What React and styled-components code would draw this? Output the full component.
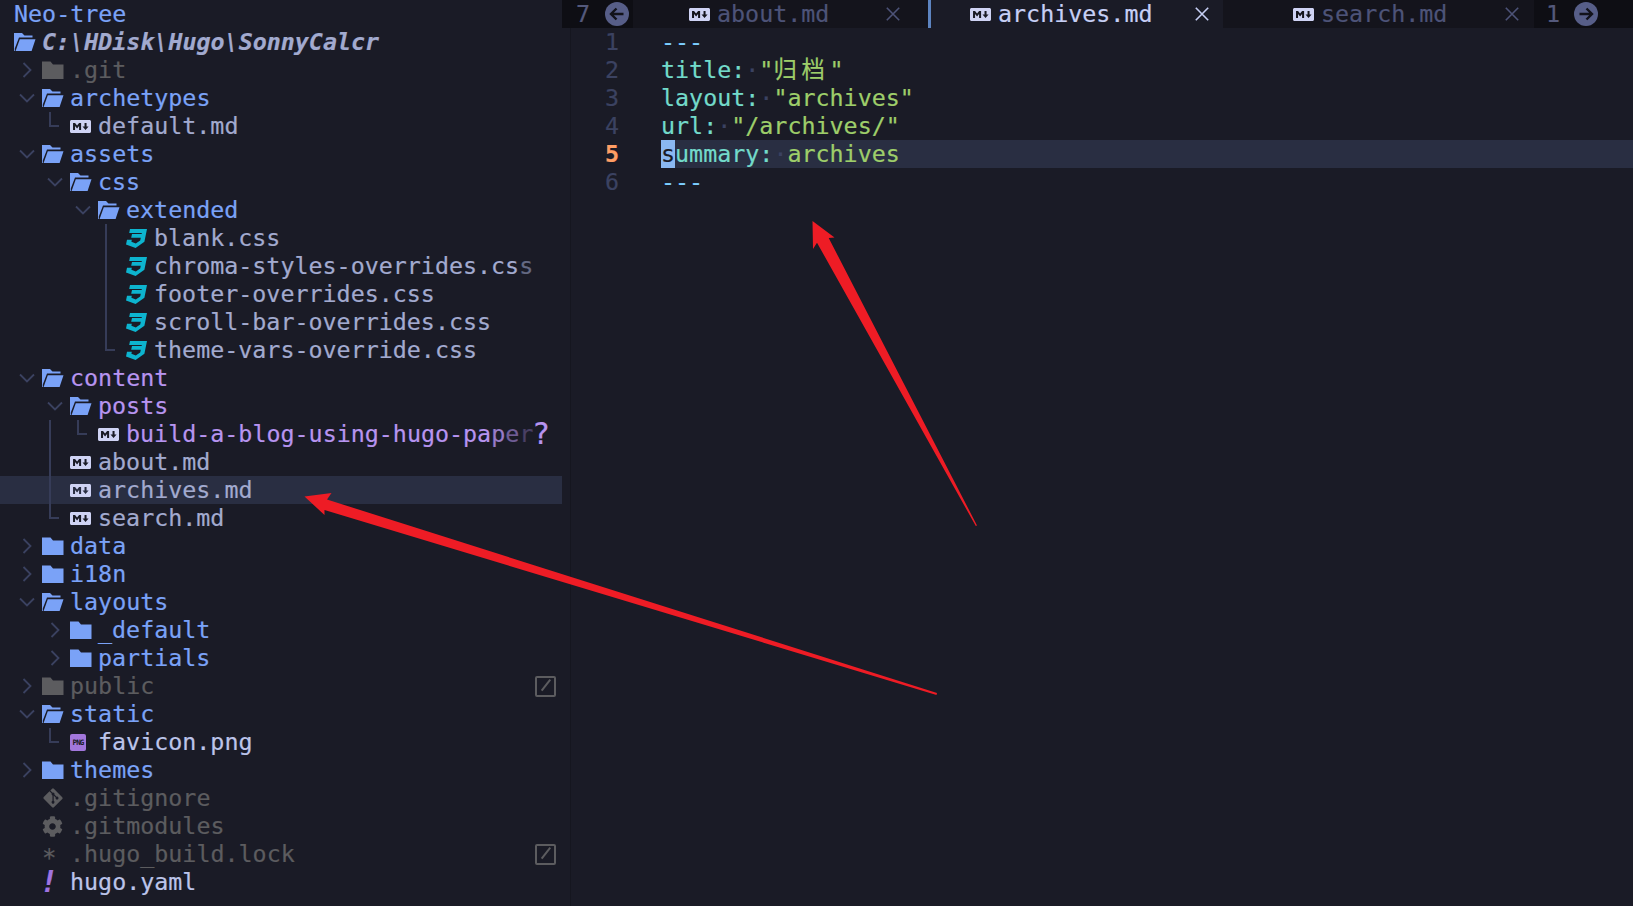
import React from "react";
import styled, { createGlobalStyle } from "styled-components";
import { FaMarkdown, FaGitAlt, FaCog } from "react-icons/fa";

const MONO = `"DejaVu Sans Mono", "Noto Sans CJK SC", monospace`;
const C = {
  bg: "#1a1b26",
  text: "#a2aacf",
  bright: "#bcc4ea",
  blue: "#7aa2f7",
  purple: "#b794f0",
  gray: "#5c5c5f",
  guide: "#363c58",
  line: "#3b4261",
  hl: "#292e42",
};

const Global = createGlobalStyle`
  html, body { margin: 0; padding: 0; background: ${C.bg}; }
  body {
    width: 1633px;
    height: 906px;
    overflow: hidden;
    font-family: ${MONO};
    font-size: 23.34px;
    -webkit-text-stroke: 0.2px currentColor;
  }
`;

const Shell = styled.div`
  position: relative;
  display: grid;
  grid-template-columns: 562px 1fr;
  width: 1633px;
  height: 906px;
  background: ${C.bg};
  overflow: hidden;
`;

/* ---------- tree ---------- */
const Tree = styled.div`
  display: flex;
  flex-direction: column;
`;
const Row = styled.div`
  display: flex;
  align-items: center;
  height: 28px;
  line-height: 28px;
  padding-left: 14px;
  white-space: nowrap;
  background: ${(p) => (p.$active ? C.hl : "transparent")};
  color: ${(p) => p.$color || C.text};
`;
const Indent = styled.span`
  position: relative;
  flex: 0 0 28px;
  height: 28px;
  &::before {
    content: "";
    display: ${(p) => (p.$g === "n" ? "none" : "block")};
    position: absolute;
    left: 7px;
    top: 0;
    width: 2px;
    height: ${(p) => (p.$g === "e" ? "15px" : "28px")};
    background: ${C.guide};
  }
  &::after {
    content: "";
    display: ${(p) => (p.$g === "e" ? "block" : "none")};
    position: absolute;
    left: 7px;
    top: 13px;
    width: 10px;
    height: 2px;
    background: ${C.guide};
  }
`;
const ChevronCell = styled.span`
  flex: 0 0 28px;
  height: 28px;
  display: flex;
  align-items: center;
  justify-content: center;
  padding-right: 3px;
  box-sizing: border-box;
`;
const IconCell = styled.span`
  flex: 0 0 28px;
  height: 28px;
  display: flex;
  align-items: center;
  justify-content: flex-start;
  color: ${(p) => p.$color || "inherit"};
`;
const Name = styled.span`
  font-style: ${(p) => (p.$root ? "italic" : "normal")};
  font-weight: ${(p) => (p.$root ? 700 : 400)};
`;
const Fade = styled.span`
  opacity: ${(p) => p.$o};
`;
const RightMark = styled.span`
  margin-left: auto;
  margin-right: 6px;
  display: flex;
  align-items: center;
`;
const Question = styled.span`
  position: absolute;
  left: 532px;
  color: ${C.purple};
  font-size: 30px;
  line-height: 28px;
  font-weight: 400;
`;
const Asterisk = styled.span`
  color: ${C.gray};
  font-size: 24px;
  line-height: 16px;
  height: 16px;
  overflow: visible;
  padding-top: 8px;
`;
const Bang = styled.span`
  color: #a074e0;
  font-size: 30px;
  line-height: 26px;
  font-weight: 700;
  font-style: italic;
  margin-left: -2px;
`;
const PngBadge = styled.span`
  width: 16px;
  height: 17px;
  border-radius: 2px;
  background: #a277dc;
  color: #1a1b26;
  font-size: 7.5px;
  font-weight: 700;
  line-height: 17px;
  text-align: center;
  letter-spacing: -0.9px;
  -webkit-text-stroke: 0;
`;
const IgnoreBox = styled.span`
  position: relative;
  box-sizing: border-box;
  width: 21px;
  height: 21px;
  border: 2px solid ${C.gray};
  border-radius: 2px;
  &::after {
    content: "";
    position: absolute;
    left: 7.5px;
    top: 0px;
    width: 1.6px;
    height: 14px;
    background: ${C.gray};
    transform: rotate(38deg);
    transform-origin: center;
  }
`;

const ChevronRight = () => (
  <svg width="10" height="16" viewBox="0 0 10 16" fill="none" stroke={C.line} strokeWidth="1.8">
    <path d="M1.5 1 L8.5 8 L1.5 15" />
  </svg>
);
const ChevronDown = () => (
  <svg width="16" height="10" viewBox="0 0 16 10" fill="none" stroke={C.line} strokeWidth="1.8">
    <path d="M1 1.5 L8 8.5 L15 1.5" />
  </svg>
);
const FolderClosed = ({ color }) => (
  <svg width="22" height="18" viewBox="0 0 22 18" fill={color}>
    <path d="M0 0.5 H8.5 L11 3.5 H21.5 V18 H0 Z" />
  </svg>
);
const FolderOpen = ({ color }) => (
  <svg width="22" height="18" viewBox="0 0 22 18" fill={color}>
    <path d="M0 0 H8 L10.5 2.6 H18.5 V4.6 H5 L0.8 15.5 V18 H0 Z" />
    <path d="M5.8 6.2 H21.5 L17.6 18 H1.6 Z" />
  </svg>
);
const CssIcon = () => (
  <svg width="21" height="19" viewBox="0 0 21 19" fill="#0db4cf">
    <path d="M4 0 H21 L18.4 12.8 L9.6 19 L0 15.6 L1 10.8 H5.8 L5.4 12.8 L9.8 14.4 L14.2 11.6 L14.8 8.8 H5.2 L6 5 H15.6 L15.9 3.9 H3.2 Z" />
  </svg>
);
const MdIcon = () => <FaMarkdown size={21} color="#cfd3f4" />;

const ROWS = [
  { d: 0, dir: "closed", name: ".git", color: C.gray, folder: C.gray },
  { d: 0, dir: "open", name: "archetypes", color: C.blue },
  { d: 1, file: "md", name: "default.md", g: "ne" },
  { d: 0, dir: "open", name: "assets", color: C.blue },
  { d: 1, dir: "open", name: "css", color: C.blue, g: "n" },
  { d: 2, dir: "open", name: "extended", color: C.blue, g: "nn" },
  { d: 3, file: "css", name: "blank.css", g: "nnnb" },
  { d: 3, file: "css", name: "chroma-styles-overrides.cs", tail: [["s", 0.55]], g: "nnnb" },
  { d: 3, file: "css", name: "footer-overrides.css", g: "nnnb" },
  { d: 3, file: "css", name: "scroll-bar-overrides.css", g: "nnnb" },
  { d: 3, file: "css", name: "theme-vars-override.css", g: "nnne" },
  { d: 0, dir: "open", name: "content", color: C.purple },
  { d: 1, dir: "open", name: "posts", color: C.purple, g: "n" },
  {
    d: 2,
    file: "md",
    name: "build-a-blog-using-hugo-pa",
    tail: [["p", 0.8], ["e", 0.55], ["r", 0.3]],
    color: C.purple,
    g: "nbe",
    question: true,
  },
  { d: 1, file: "md", name: "about.md", g: "nb" },
  { d: 1, file: "md", name: "archives.md", g: "nb", active: true },
  { d: 1, file: "md", name: "search.md", g: "ne" },
  { d: 0, dir: "closed", name: "data", color: C.blue },
  { d: 0, dir: "closed", name: "i18n", color: C.blue },
  { d: 0, dir: "open", name: "layouts", color: C.blue },
  { d: 1, dir: "closed", name: "_default", color: C.blue, g: "n" },
  { d: 1, dir: "closed", name: "partials", color: C.blue, g: "n" },
  { d: 0, dir: "closed", name: "public", color: C.gray, folder: C.gray, ignored: true },
  { d: 0, dir: "open", name: "static", color: C.blue },
  { d: 1, file: "png", name: "favicon.png", g: "ne", color: C.bright },
  { d: 0, dir: "closed", name: "themes", color: C.blue },
  { d: 0, file: "git", name: ".gitignore", g: "n", color: C.gray },
  { d: 0, file: "gear", name: ".gitmodules", g: "n", color: C.gray },
  { d: 0, file: "star", name: ".hugo_build.lock", g: "n", color: C.gray, ignored: true },
  { d: 0, file: "bang", name: "hugo.yaml", g: "n", color: C.bright },
];

const FileIcon = ({ kind }) => {
  switch (kind) {
    case "md":
      return <MdIcon />;
    case "css":
      return <CssIcon />;
    case "png":
      return <PngBadge>PNG</PngBadge>;
    case "git":
      return <FaGitAlt size={22} color={C.gray} />;
    case "gear":
      return <FaCog size={21} color={C.gray} />;
    case "star":
      return <Asterisk>*</Asterisk>;
    case "bang":
      return <Bang>!</Bang>;
    default:
      return null;
  }
};

const TreeRow = ({ r }) => (
  <Row $color={r.color} $active={r.active}>
    {(r.g || "").split("").map((g, i) => (
      <Indent key={i} $g={g} />
    ))}
    {r.dir && (
      <ChevronCell>{r.dir === "open" ? <ChevronDown /> : <ChevronRight />}</ChevronCell>
    )}
    <IconCell>
      {r.dir === "open" && <FolderOpen color={r.folder || C.blue} />}
      {r.dir === "closed" && <FolderClosed color={r.folder || C.blue} />}
      {r.file && <FileIcon kind={r.file} />}
    </IconCell>
    <Name>
      {r.name}
      {(r.tail || []).map(([c, o], i) => (
        <Fade key={i} $o={o}>
          {c}
        </Fade>
      ))}
    </Name>
    {r.question && <Question>?</Question>}
    {r.ignored && (
      <RightMark>
        <IgnoreBox />
      </RightMark>
    )}
  </Row>
);

/* ---------- tabs ---------- */
const Main = styled.div`
  display: flex;
  flex-direction: column;
  min-width: 0;
`;
const TabBar = styled.div`
  display: flex;
  height: 28px;
  line-height: 28px;
  flex: 0 0 28px;
  white-space: nowrap;
`;
const Overflow = styled.div`
  display: flex;
  align-items: center;
  box-sizing: border-box;
  width: ${(p) => p.$w}px;
  padding-left: ${(p) => p.$pad}px;
  background: #0e0e14;
  color: #54597c;
  flex-shrink: ${(p) => (p.$grow ? 1 : 0)};
  flex-grow: ${(p) => (p.$grow ? 1 : 0)};
`;
const Arrow = styled.span`
  display: flex;
  margin-left: ${(p) => p.$gap}px;
`;
const Tab = styled.div`
  display: flex;
  align-items: center;
  box-sizing: border-box;
  width: ${(p) => p.$w}px;
  padding-left: ${(p) => p.$pl}px;
  padding-right: ${(p) => p.$pr}px;
  background: ${(p) => (p.$active ? C.bg : "#14141c")};
  color: ${(p) => (p.$active ? "#c6cff5" : "#4d5378")};
  border-left: ${(p) => (p.$active ? "3px solid #5d84c0" : "none")};
`;
const TabLabel = styled.span`
  margin-left: 7px;
  flex: 1;
`;

const CircleArrow = ({ dir }) => (
  <svg width="24" height="24" viewBox="0 0 24 24">
    <circle cx="12" cy="12" r="12" fill="#575e88" />
    <path
      d={dir === "left" ? "M18.5 12 H6 M11.5 6.5 L6 12 L11.5 17.5" : "M5.5 12 H18 M12.5 6.5 L18 12 L12.5 17.5"}
      fill="none"
      stroke="#12121a"
      strokeWidth="2.4"
    />
  </svg>
);
const CloseX = ({ color }) => (
  <svg width="14" height="14" viewBox="0 0 14 14" stroke={color} strokeWidth="1.6" fill="none">
    <path d="M0.8 0.8 L13.2 13.2 M13.2 0.8 L0.8 13.2" />
  </svg>
);

/* ---------- editor ---------- */
const Editor = styled.div`
  flex: 1;
  margin-left: 8px;
  border-left: 1px solid #15161f;
`;
const Line = styled.div`
  display: flex;
  height: 28px;
  line-height: 28px;
  white-space: pre;
`;
const LineNo = styled.span`
  flex: 0 0 48px;
  margin-right: 42px;
  text-align: right;
  color: ${(p) => (p.$cur ? "#ff9e64" : C.line)};
  font-weight: ${(p) => (p.$cur ? 700 : 400)};
`;
const Code = styled.span`
  flex: 1;
  background: ${(p) => (p.$cur ? C.hl : "transparent")};
`;
const Dash = styled.span`
  color: #7dcfff;
`;
const Key = styled.span`
  color: #73daca;
`;
const Str = styled.span`
  color: #9ece6a;
`;
const Dot = styled.span`
  color: #3b4261;
`;
const Cursor = styled.span`
  background: #8ab8f2;
  color: #1a1b26;
`;
const Han = styled.span`
  letter-spacing: 4.7px;
`;

/* ---------- annotation arrows ---------- */
const Overlay = styled.svg`
  position: absolute;
  left: 0;
  top: 0;
  pointer-events: none;
`;

export default function App() {
  return (
    <>
      <Global />
      <Shell>
        <Tree>
          <Row $color={C.blue}>Neo-tree</Row>
          <Row $color="#a2aacf">
            <IconCell>
              <FolderOpen color={C.blue} />
            </IconCell>
            <Name $root>C:\HDisk\Hugo\SonnyCalcr</Name>
          </Row>
          {ROWS.map((r) => (
            <TreeRow key={r.name} r={r} />
          ))}
        </Tree>
        <Main>
          <TabBar>
            <Overflow $w={71} $pad={14}>
              7
              <Arrow $gap={15}>
                <CircleArrow dir="left" />
              </Arrow>
            </Overflow>
            <Tab $w={295} $pl={56} $pr={28}>
              <MdIcon />
              <TabLabel>about.md</TabLabel>
              <CloseX color="#4d5378" />
            </Tab>
            <Tab $w={295} $pl={39} $pr={14} $active>
              <MdIcon />
              <TabLabel>archives.md</TabLabel>
              <CloseX color="#c6cff5" />
            </Tab>
            <Tab $w={311} $pl={70} $pr={15}>
              <MdIcon />
              <TabLabel>search.md</TabLabel>
              <CloseX color="#4d5378" />
            </Tab>
            <Overflow $w={99} $pad={12} $grow>
              1
              <Arrow $gap={14}>
                <CircleArrow dir="right" />
              </Arrow>
            </Overflow>
          </TabBar>
          <Editor>
            <Line>
              <LineNo>1</LineNo>
              <Code>
                <Dash>---</Dash>
              </Code>
            </Line>
            <Line>
              <LineNo>2</LineNo>
              <Code>
                <Key>title:</Key>
                <Dot>·</Dot>
                <Str>
                  "<Han>归档</Han>"
                </Str>
              </Code>
            </Line>
            <Line>
              <LineNo>3</LineNo>
              <Code>
                <Key>layout:</Key>
                <Dot>·</Dot>
                <Str>"archives"</Str>
              </Code>
            </Line>
            <Line>
              <LineNo>4</LineNo>
              <Code>
                <Key>url:</Key>
                <Dot>·</Dot>
                <Str>"/archives/"</Str>
              </Code>
            </Line>
            <Line>
              <LineNo $cur>5</LineNo>
              <Code $cur>
                <Cursor>s</Cursor>
                <Key>ummary:</Key>
                <Dot>·</Dot>
                <Str>archives</Str>
              </Code>
            </Line>
            <Line>
              <LineNo>6</LineNo>
              <Code>
                <Dash>---</Dash>
              </Code>
            </Line>
          </Editor>
        </Main>
        <Overlay width="1633" height="906" viewBox="0 0 1633 906">
          <polygon
            fill="#ee1c25"
            points="304.5,496.5 331.5,493 327,499.5 937,693 936.5,695 324.5,510 324.5,515"
          />
          <polygon
            fill="#ee1c25"
            points="812.5,221 834.5,237.5 828.7,238 977,525.5 975.8,526 817,242.7 813,249"
          />
        </Overlay>
      </Shell>
    </>
  );
}
